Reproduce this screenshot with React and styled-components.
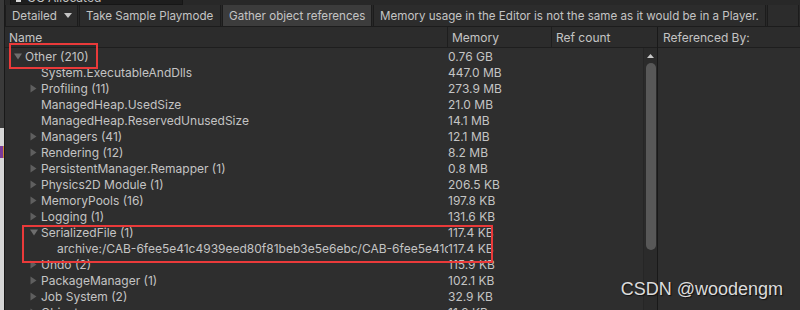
import React from 'react'
import styled, { createGlobalStyle } from 'styled-components'

const GlobalStyle = createGlobalStyle`
  html, body {
    margin: 0;
    padding: 0;
    background: #282828;
  }
  body {
    font-family: Inter, 'Noto Sans', sans-serif;
    font-size: 12px;
    color: #c4c4c4;
  }
`

const Page = styled.div`
  position: relative;
  width: 800px;
  height: 310px;
  overflow: hidden;
  display: flex;
  background: #282828;
`

const LeftEdge = styled.div`
  width: 4px;
  flex: none;
  display: flex;
  flex-direction: column;
  background: #3a3a3a;
  border-right: 1px solid #191919;
`

const EdgeLight = styled.div`
  margin-top: 128px;
  flex: 1;
  background: #d6d6d6;
  display: flex;
  flex-direction: column;
  padding-top: 18px;
`

const EdgeMark = styled.div`
  width: 3px;
  height: 12px;
  background: #7b3a9a;
  border-right: 1px solid #d08a3a;
`

const Window = styled.div`
  flex: 1;
  display: flex;
  flex-direction: column;
  min-width: 0;
`

const TopStrip = styled.div`
  height: 5px;
  overflow: hidden;
  display: flex;
  padding-left: 5px;
`

const GcDropdown = styled.div`
  width: 173px;
  height: 16px;
  margin-top: -11px;
  background: #1d1d1d;
  border: 1px solid #161616;
  display: flex;
  align-items: flex-end;
  gap: 6px;
  padding-left: 5px;
  box-sizing: border-box;
  span {
    line-height: 12px;
    color: #c4c4c4;
  }
`

const GcIcon = styled.i`
  width: 5px;
  height: 8px;
  margin-bottom: 2px;
  background: #d8d8d8;
`

const Toolbar = styled.div`
  height: 21px;
  display: flex;
  align-items: stretch;
  border-bottom: 1px solid #1c1c1c;
  background: #282828;
  font-size: 11.6px;
`

const ToolButton = styled.div`
  display: flex;
  align-items: center;
  gap: 6px;
  padding: 0 6px;
  box-sizing: border-box;
  width: ${p => p.$w}px;
  flex: ${p => (p.$grow ? 1 : 'none')};
  background: ${p => (p.$active ? '#3c3c3c' : '#2c2c2c')};
  border-right: 1px solid #1c1c1c;
  border-left: 1px solid #1c1c1c;
  margin-right: 1px;
  white-space: nowrap;
  overflow: hidden;
  color: #c4c4c4;
`

const Caret = styled.svg`
  width: 8px;
  height: 5px;
  flex: none;
  margin-left: 1px;
`

const Content = styled.div`
  flex: 1;
  display: flex;
  min-height: 0;
`

const TreePanel = styled.div`
  width: 652px;
  flex: none;
  display: flex;
  flex-direction: column;
  border-right: 1px solid #191919;
`

const HeaderRow = styled.div`
  height: 20px;
  display: flex;
  background: #2c2c2c;
  border-bottom: 1px solid #1e1e1e;
`

const HeaderCell = styled.div`
  width: ${p => p.$w}px;
  flex: ${p => (p.$grow ? 1 : 'none')};
  padding-left: ${p => p.$pad}px;
  box-sizing: border-box;
  display: flex;
  align-items: center;
  border-right: ${p => (p.$last ? 'none' : '1px solid #1e1e1e')};
  white-space: nowrap;
`

const TreeBody = styled.div`
  flex: 1;
  display: flex;
  background: #2e2e2e;
  min-height: 0;
`

const Rows = styled.div`
  flex: 1;
  display: flex;
  flex-direction: column;
  min-width: 0;
`

const Row = styled.div`
  height: 16px;
  flex: none;
  display: flex;
  align-items: center;
`

const NameCell = styled.div`
  width: 443px;
  flex: none;
  display: flex;
  align-items: center;
  padding-left: ${p => 9 + p.$level * 16}px;
  box-sizing: border-box;
  overflow: hidden;
  white-space: nowrap;
`

const Foldout = styled.span`
  width: 11px;
  flex: none;
  display: flex;
  align-items: center;
  svg {
    display: block;
  }
`

const MemCell = styled.div`
  width: 100px;
  flex: none;
  white-space: nowrap;
`

const ScrollTrack = styled.div`
  width: 14px;
  flex: none;
  display: flex;
  flex-direction: column;
  align-items: center;
  background: #2b2b2b;
  border-left: 1px solid #262626;
  padding-top: 6px;
  box-sizing: border-box;
`

const ScrollArrow = styled.svg`
  width: 7px;
  height: 4px;
  flex: none;
`

const Thumb = styled.div`
  width: 10px;
  height: 187px;
  margin-top: 5px;
  border-radius: 5px;
  background: #585858;
`

const RightPanel = styled.div`
  flex: 1;
  display: flex;
  flex-direction: column;
  background: #2e2e2e;
`

const Highlight = styled.div`
  position: absolute;
  left: ${p => p.$x}px;
  top: ${p => p.$y}px;
  width: ${p => p.$w}px;
  height: ${p => p.$h}px;
  border: 2.5px solid #ea3a3a;
  box-sizing: border-box;
  pointer-events: none;
`

const Watermark = styled.div`
  position: absolute;
  right: 17px;
  bottom: 10px;
  font-family: 'Liberation Sans', Arial, sans-serif;
  font-size: 18px;
  color: #dcdcdc;
  text-shadow: 1px 1px 1px #111;
`

const rows = [
  { name: 'Other (210)', mem: '0.76 GB', level: 0, fold: 'open' },
  { name: 'System.ExecutableAndDlls', mem: '447.0 MB', level: 1 },
  { name: 'Profiling (11)', mem: '273.9 MB', level: 1, fold: 'closed' },
  { name: 'ManagedHeap.UsedSize', mem: '21.0 MB', level: 1 },
  { name: 'ManagedHeap.ReservedUnusedSize', mem: '14.1 MB', level: 1 },
  { name: 'Managers (41)', mem: '12.1 MB', level: 1, fold: 'closed' },
  { name: 'Rendering (12)', mem: '8.2 MB', level: 1, fold: 'closed' },
  { name: 'PersistentManager.Remapper (1)', mem: '0.8 MB', level: 1, fold: 'closed' },
  { name: 'Physics2D Module (1)', mem: '206.5 KB', level: 1, fold: 'closed' },
  { name: 'MemoryPools (16)', mem: '197.8 KB', level: 1, fold: 'closed' },
  { name: 'Logging (1)', mem: '131.6 KB', level: 1, fold: 'closed' },
  { name: 'SerializedFile (1)', mem: '117.4 KB', level: 1, fold: 'open' },
  {
    name: 'archive:/CAB-6fee5e41c4939eed80f81beb3e5e6ebc/CAB-6fee5e41c4939eed80f81beb3e5e6ebc',
    mem: '117.4 KB',
    level: 2,
  },
  { name: 'Undo (2)', mem: '115.9 KB', level: 1, fold: 'closed' },
  { name: 'PackageManager (1)', mem: '102.1 KB', level: 1, fold: 'closed' },
  { name: 'Job System (2)', mem: '32.9 KB', level: 1, fold: 'closed' },
  { name: 'Objects', mem: '11.9 KB', level: 1, fold: 'closed' },
]

const FoldIcon = ({ open }) =>
  open ? (
    <svg width="8" height="7" viewBox="0 0 8 7">
      <path d="M0 0.5 H8 L4 6.5 Z" fill="#6e6e6e" />
    </svg>
  ) : (
    <svg width="7" height="9" viewBox="0 0 7 9">
      <path d="M0.5 0.5 V8.5 L6.5 4.5 Z" fill="#5f5f5f" />
    </svg>
  )

const App = () => {
  return (
    <Page>
      <GlobalStyle />
      <LeftEdge>
        <EdgeLight>
          <EdgeMark />
        </EdgeLight>
      </LeftEdge>
      <Window>
        <TopStrip>
          <GcDropdown>
            <GcIcon />
            <span>GC Allocated</span>
          </GcDropdown>
        </TopStrip>
        <Toolbar>
          <ToolButton $w={73}>
            Detailed
            <Caret viewBox="0 0 8 5">
              <path d="M0 0 H8 L4 5 Z" fill="#c4c4c4" />
            </Caret>
          </ToolButton>
          <ToolButton $w={142}>Take Sample Playmode</ToolButton>
          <ToolButton $w={150} $active>Gather object references</ToolButton>
          <ToolButton $w={393}>
            Memory usage in the Editor is not the same as it would be in a Player.
          </ToolButton>
          <ToolButton $grow />
        </Toolbar>
        <Content>
          <TreePanel>
            <HeaderRow>
              <HeaderCell $w={443} $pad={4}>Name</HeaderCell>
              <HeaderCell $w={104} $pad={4}>Memory</HeaderCell>
              <HeaderCell $grow $pad={4} $last>Ref count</HeaderCell>
            </HeaderRow>
            <TreeBody>
              <Rows>
                {rows.map(r => (
                  <Row key={r.name}>
                    <NameCell $level={r.level}>
                      <Foldout>{r.fold && <FoldIcon open={r.fold === 'open'} />}</Foldout>
                      {r.name}
                    </NameCell>
                    <MemCell>{r.mem}</MemCell>
                  </Row>
                ))}
              </Rows>
              <ScrollTrack>
                <ScrollArrow viewBox="0 0 7 4">
                  <path d="M0 4 L3.5 0 L7 4 Z" fill="#c8c8c8" />
                </ScrollArrow>
                <Thumb />
              </ScrollTrack>
            </TreeBody>
          </TreePanel>
          <RightPanel>
            <HeaderRow>
              <HeaderCell $grow $pad={5} $last>Referenced By:</HeaderCell>
            </HeaderRow>
          </RightPanel>
        </Content>
      </Window>
      <Highlight $x={9} $y={43} $w={89} $h={26} />
      <Highlight $x={22} $y={225} $w={471} $h={38} />
      <Watermark>CSDN @woodengm</Watermark>
    </Page>
  )
}

export default App
